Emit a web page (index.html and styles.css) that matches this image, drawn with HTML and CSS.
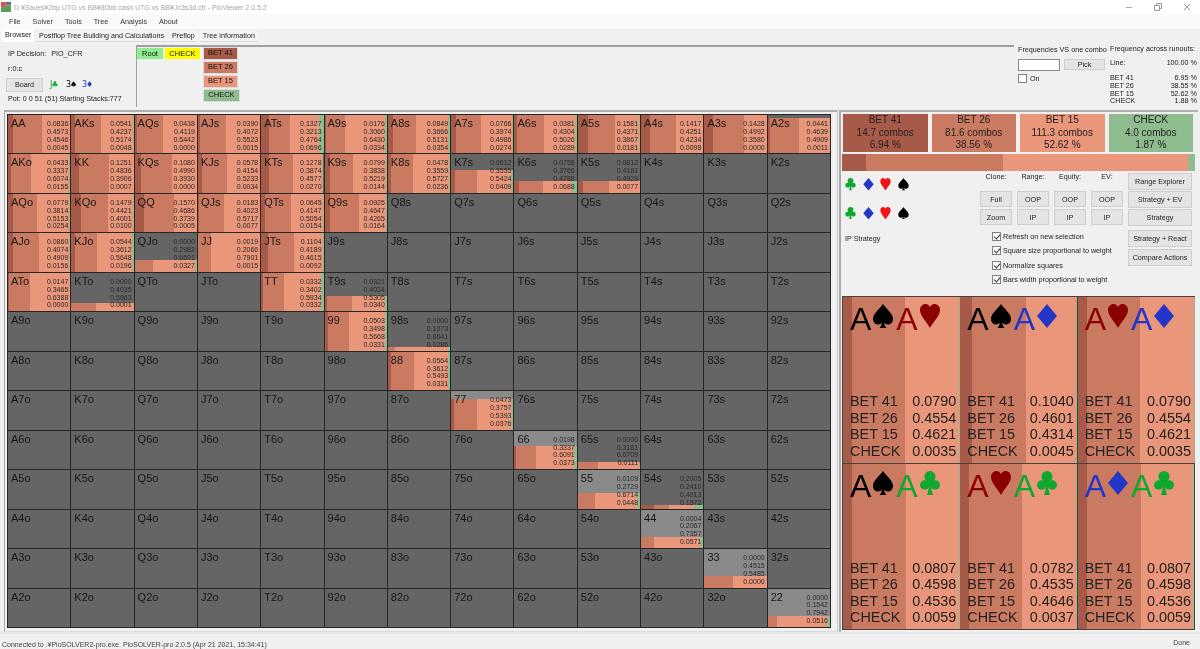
FILE: index.html
```html
<!DOCTYPE html>
<html lang="en">
<head>
<meta charset="utf-8">
<title>PioViewer 2.0.5.2</title>
<link rel="stylesheet" href="styles.css">
</head>
<body>
<svg class="defs" width="0" height="0" aria-hidden="true">
  <symbol id="spade" viewBox="0 0 20 24"><path d="M10 0C13 5 20 9 20 15C20 19 17 20.5 15 20.5C13 20.5 12 19.5 11.2 18.5C11.4 20.5 12 22.5 13.5 24H6.5C8 22.5 8.6 20.5 8.8 18.5C8 19.5 7 20.5 5 20.5C3 20.5 0 19 0 15C0 9 7 5 10 0Z"/></symbol>
  <symbol id="heart" viewBox="0 0 20 24"><path d="M10 24C7 18 0 12 0 6C0 2.5 2.5 0 5.5 0C7.5 0 9 1 10 3C11 1 12.5 0 14.5 0C17.5 0 20 2.5 20 6C20 12 13 18 10 24Z"/></symbol>
  <symbol id="diamond" viewBox="0 0 20 24"><path d="M10 0L20 12L10 24L0 12Z"/></symbol>
  <symbol id="club" viewBox="0 0 20 24"><circle cx="10" cy="5.5" r="5.5"/><circle cx="4.7" cy="14" r="4.7"/><circle cx="15.3" cy="14" r="4.7"/><path d="M9 8H11C11 15 11.3 20 13 24H7C8.7 20 9 15 9 8Z"/><path d="M7 10H13V15H7Z"/></symbol>
</svg>
<div class="app">
  <header class="titlebar">
    <svg class="appicon" width="10" height="10" viewBox="0 0 10 10"><rect width="10" height="10" fill="#8a8a8a"/><rect width="4" height="5" fill="#d9534f"/><rect x="5" y="5" width="5" height="5" fill="#4aa84a"/><rect y="6" width="4" height="4" fill="#4aa84a"/><rect x="5" width="5" height="2" fill="#6a6a6a"/></svg>
    <span class="titletext">D:¥Saves¥2bp UTG vs BB¥80bb cash UTG vs BB¥Jc3s3d.cfr - PioViewer 2.0.5.2</span>
    <div class="winctl">
      <svg width="8" height="8" viewBox="0 0 8 8"><path d="M1 4.5h6" stroke="#b0b0b0" fill="none"/></svg>
      <svg width="8" height="8" viewBox="0 0 8 8"><path d="M.5 2.5h5v5h-5zM2.5 2.5v-2h5v5h-2" stroke="#9a9a9a" fill="none"/></svg>
      <svg width="8" height="8" viewBox="0 0 8 8"><path d="M1 1l6 6M7 1l-6 6" stroke="#9a9a9a" fill="none"/></svg>
    </div>
  </header>
  <nav class="menubar"><span>File</span><span>Solver</span><span>Tools</span><span>Tree</span><span>Analysis</span><span>About</span></nav>
  <nav class="tabs"><span class="tab active">Browser</span><span class="tab">Postflop Tree Building and Calculations</span><span class="tab">Preflop</span><span class="tab">Tree information</span></nav>

  <section class="toppanel">
    <div class="info">
      <div class="decision"><span>IP Decision:</span><span>PIO_CFR</span></div>
      <div class="rline">r:0:c</div>
      <div class="boardrow"><button class="btn board">Board</button><span class="bc g">J♣</span><span class="bc k">3♠</span><span class="bc u">3♦</span></div>
      <div class="pot">Pot: 0 0 51 (51) Starting Stacks:777</div>
    </div>
    <div class="tree">
      <span class="node root">Root</span>
      <span class="node check">CHECK</span>
      <div class="children">
        <span class="node n1">BET 41</span>
        <span class="node n2">BET 26</span>
        <span class="node n3">BET 15</span>
        <span class="node n4">CHECK</span>
      </div>
    </div>
    <div class="vsone">
      <div class="vstitle">Frequencies VS one combo</div>
      <div class="pickrow"><span class="textbox"></span><button class="btn pick">Pick</button></div>
      <div class="onrow"><span class="cb off"></span><span>On</span></div>
    </div>
    <div class="runouts">
      <div class="rtitle">Frequency across runouts:</div>
      <div class="rrow line"><span>Line:</span><span>100.00 %</span></div>
      <div class="rrow"><span>BET 41</span><span>6.95 %</span></div>
      <div class="rrow"><span>BET 26</span><span>38.55 %</span></div>
      <div class="rrow"><span>BET 15</span><span>52.62 %</span></div>
      <div class="rrow"><span>CHECK</span><span>1.88 %</span></div>
    </div>
  </section>

  <main class="main">
    <section class="gridframe">
      <div class="grid">
        <div class="cell"><div class="fill"><i class="a" style="width:8.36%"></i><i class="b" style="width:45.73%"></i><i class="c" style="width:45.46%"></i><i class="d" style="width:.45%"></i></div><b>AA</b><p>0.0836<br>0.4573<br>0.4546<br>0.0045</p></div>
        <div class="cell"><div class="fill"><i class="a" style="width:5.41%"></i><i class="b" style="width:42.37%"></i><i class="c" style="width:51.74%"></i><i class="d" style="width:.48%"></i></div><b>AKs</b><p>0.0541<br>0.4237<br>0.5174<br>0.0048</p></div>
        <div class="cell"><div class="fill"><i class="a" style="width:4.38%"></i><i class="b" style="width:41.19%"></i><i class="c" style="width:54.42%"></i></div><b>AQs</b><p>0.0438<br>0.4119<br>0.5442<br>0.0000</p></div>
        <div class="cell"><div class="fill"><i class="a" style="width:3.9%"></i><i class="b" style="width:40.72%"></i><i class="c" style="width:55.23%"></i><i class="d" style="width:.15%"></i></div><b>AJs</b><p>0.0390<br>0.4072<br>0.5523<br>0.0015</p></div>
        <div class="cell"><div class="fill"><i class="a" style="width:13.27%"></i><i class="b" style="width:32.13%"></i><i class="c" style="width:47.64%"></i><i class="d" style="width:6.96%"></i></div><b>ATs</b><p>0.1327<br>0.3213<br>0.4764<br>0.0696</p></div>
        <div class="cell"><div class="fill"><i class="a" style="width:1.76%"></i><i class="b" style="width:30.6%"></i><i class="c" style="width:64.3%"></i><i class="d" style="width:3.34%"></i></div><b>A9s</b><p>0.0176<br>0.3060<br>0.6430<br>0.0334</p></div>
        <div class="cell"><div class="fill"><i class="a" style="width:8.49%"></i><i class="b" style="width:36.66%"></i><i class="c" style="width:51.31%"></i><i class="d" style="width:3.54%"></i></div><b>A8s</b><p>0.0849<br>0.3666<br>0.5131<br>0.0354</p></div>
        <div class="cell"><div class="fill"><i class="a" style="width:7.66%"></i><i class="b" style="width:39.74%"></i><i class="c" style="width:49.86%"></i><i class="d" style="width:2.74%"></i></div><b>A7s</b><p>0.0766<br>0.3974<br>0.4986<br>0.0274</p></div>
        <div class="cell"><div class="fill"><i class="a" style="width:3.81%"></i><i class="b" style="width:43.04%"></i><i class="c" style="width:50.26%"></i><i class="d" style="width:2.89%"></i></div><b>A6s</b><p>0.0381<br>0.4304<br>0.5026<br>0.0289</p></div>
        <div class="cell"><div class="fill"><i class="a" style="width:15.81%"></i><i class="b" style="width:43.71%"></i><i class="c" style="width:38.67%"></i><i class="d" style="width:1.81%"></i></div><b>A5s</b><p>0.1581<br>0.4371<br>0.3867<br>0.0181</p></div>
        <div class="cell"><div class="fill"><i class="a" style="width:14.17%"></i><i class="b" style="width:42.51%"></i><i class="c" style="width:42.34%"></i><i class="d" style="width:.98%"></i></div><b>A4s</b><p>0.1417<br>0.4251<br>0.4234<br>0.0098</p></div>
        <div class="cell"><div class="fill"><i class="a" style="width:14.28%"></i><i class="b" style="width:49.92%"></i><i class="c" style="width:35.8%"></i></div><b>A3s</b><p>0.1428<br>0.4992<br>0.3580<br>0.0000</p></div>
        <div class="cell"><div class="fill" style="height:92%"><i class="a" style="width:4.41%"></i><i class="b" style="width:46.39%"></i><i class="c" style="width:49.09%"></i><i class="d" style="width:.11%"></i></div><b>A2s</b><p>0.0441<br>0.4639<br>0.4909<br>0.0011</p></div>

        <div class="cell"><div class="fill"><i class="a" style="width:4.33%"></i><i class="b" style="width:33.37%"></i><i class="c" style="width:60.74%"></i><i class="d" style="width:1.55%"></i></div><b>AKo</b><p>0.0433<br>0.3337<br>0.6074<br>0.0155</p></div>
        <div class="cell"><div class="fill"><i class="a" style="width:12.51%"></i><i class="b" style="width:48.36%"></i><i class="c" style="width:39.06%"></i><i class="d" style="width:.07%"></i></div><b>KK</b><p>0.1251<br>0.4836<br>0.3906<br>0.0007</p></div>
        <div class="cell"><div class="fill"><i class="a" style="width:10.8%"></i><i class="b" style="width:49.9%"></i><i class="c" style="width:39.3%"></i></div><b>KQs</b><p>0.1080<br>0.4990<br>0.3930<br>0.0000</p></div>
        <div class="cell"><div class="fill"><i class="a" style="width:5.78%"></i><i class="b" style="width:41.54%"></i><i class="c" style="width:52.33%"></i><i class="d" style="width:.34%"></i></div><b>KJs</b><p>0.0578<br>0.4154<br>0.5233<br>0.0034</p></div>
        <div class="cell"><div class="fill"><i class="a" style="width:12.78%"></i><i class="b" style="width:38.74%"></i><i class="c" style="width:45.77%"></i><i class="d" style="width:2.7%"></i></div><b>KTs</b><p>0.1278<br>0.3874<br>0.4577<br>0.0270</p></div>
        <div class="cell"><div class="fill"><i class="a" style="width:7.99%"></i><i class="b" style="width:38.38%"></i><i class="c" style="width:52.19%"></i><i class="d" style="width:1.44%"></i></div><b>K9s</b><p>0.0799<br>0.3838<br>0.5219<br>0.0144</p></div>
        <div class="cell"><div class="fill"><i class="a" style="width:4.78%"></i><i class="b" style="width:35.59%"></i><i class="c" style="width:57.27%"></i><i class="d" style="width:2.36%"></i></div><b>K8s</b><p>0.0478<br>0.3559<br>0.5727<br>0.0236</p></div>
        <div class="cell"><div class="fill" style="height:60%"><i class="a" style="width:6.12%"></i><i class="b" style="width:35.55%"></i><i class="c" style="width:54.24%"></i><i class="d" style="width:4.09%"></i></div><b>K7s</b><p>0.0612<br>0.3555<br>0.5424<br>0.0409</p></div>
        <div class="cell"><div class="fill" style="height:30%"><i class="a" style="width:7.58%"></i><i class="b" style="width:37.66%"></i><i class="c" style="width:47.88%"></i><i class="d" style="width:6.88%"></i></div><b>K6s</b><p>0.0758<br>0.3766<br>0.4788<br>0.0688</p></div>
        <div class="cell"><div class="fill" style="height:30%"><i class="a" style="width:8.12%"></i><i class="b" style="width:41.81%"></i><i class="c" style="width:49.29%"></i><i class="d" style="width:.77%"></i></div><b>K5s</b><p>0.0812<br>0.4181<br>0.4929<br>0.0077</p></div>
        <div class="cell"><b>K4s</b></div>
        <div class="cell"><b>K3s</b></div>
        <div class="cell"><b>K2s</b></div>

        <div class="cell"><div class="fill"><i class="a" style="width:7.79%"></i><i class="b" style="width:38.14%"></i><i class="c" style="width:51.53%"></i><i class="d" style="width:2.54%"></i></div><b>AQo</b><p>0.0779<br>0.3814<br>0.5153<br>0.0254</p></div>
        <div class="cell"><div class="fill"><i class="a" style="width:14.79%"></i><i class="b" style="width:44.21%"></i><i class="c" style="width:40.01%"></i><i class="d" style="width:1%"></i></div><b>KQo</b><p>0.1479<br>0.4421<br>0.4001<br>0.0100</p></div>
        <div class="cell"><div class="fill"><i class="a" style="width:15.7%"></i><i class="b" style="width:46.86%"></i><i class="c" style="width:37.39%"></i><i class="d" style="width:.05%"></i></div><b>QQ</b><p>0.1570<br>0.4686<br>0.3739<br>0.0005</p></div>
        <div class="cell"><div class="fill"><i class="a" style="width:1.83%"></i><i class="b" style="width:40.23%"></i><i class="c" style="width:57.17%"></i><i class="d" style="width:.77%"></i></div><b>QJs</b><p>0.0183<br>0.4023<br>0.5717<br>0.0077</p></div>
        <div class="cell"><div class="fill"><i class="a" style="width:6.45%"></i><i class="b" style="width:41.47%"></i><i class="c" style="width:50.54%"></i><i class="d" style="width:1.54%"></i></div><b>QTs</b><p>0.0645<br>0.4147<br>0.5054<br>0.0154</p></div>
        <div class="cell"><div class="fill"><i class="a" style="width:9.25%"></i><i class="b" style="width:46.47%"></i><i class="c" style="width:42.65%"></i><i class="d" style="width:1.64%"></i></div><b>Q9s</b><p>0.0925<br>0.4647<br>0.4265<br>0.0164</p></div>
        <div class="cell"><b>Q8s</b></div>
        <div class="cell"><b>Q7s</b></div>
        <div class="cell"><b>Q6s</b></div>
        <div class="cell"><b>Q5s</b></div>
        <div class="cell"><b>Q4s</b></div>
        <div class="cell"><b>Q3s</b></div>
        <div class="cell"><b>Q2s</b></div>

        <div class="cell"><div class="fill"><i class="a" style="width:8.6%"></i><i class="b" style="width:40.74%"></i><i class="c" style="width:49.09%"></i><i class="d" style="width:1.56%"></i></div><b>AJo</b><p>0.0860<br>0.4074<br>0.4909<br>0.0156</p></div>
        <div class="cell"><div class="fill"><i class="a" style="width:5.44%"></i><i class="b" style="width:36.12%"></i><i class="c" style="width:56.48%"></i><i class="d" style="width:1.96%"></i></div><b>KJo</b><p>0.0544<br>0.3612<br>0.5648<br>0.0196</p></div>
        <div class="cell"><div class="fill" style="height:30%"><i class="b" style="width:29.82%"></i><i class="c" style="width:66.91%"></i><i class="d" style="width:3.27%"></i></div><b>QJo</b><p>0.0000<br>0.2982<br>0.6691<br>0.0327</p></div>
        <div class="cell"><div class="fill"><i class="a" style="width:.19%"></i><i class="b" style="width:20.66%"></i><i class="c" style="width:79.01%"></i><i class="d" style="width:.15%"></i></div><b>JJ</b><p>0.0019<br>0.2066<br>0.7901<br>0.0015</p></div>
        <div class="cell"><div class="fill"><i class="a" style="width:11.04%"></i><i class="b" style="width:41.89%"></i><i class="c" style="width:46.15%"></i><i class="d" style="width:.92%"></i></div><b>JTs</b><p>0.1104<br>0.4189<br>0.4615<br>0.0092</p></div>
        <div class="cell"><b>J9s</b></div>
        <div class="cell"><b>J8s</b></div>
        <div class="cell"><b>J7s</b></div>
        <div class="cell"><b>J6s</b></div>
        <div class="cell"><b>J5s</b></div>
        <div class="cell"><b>J4s</b></div>
        <div class="cell"><b>J3s</b></div>
        <div class="cell"><b>J2s</b></div>

        <div class="cell"><div class="fill"><i class="a" style="width:1.47%"></i><i class="b" style="width:34.65%"></i><i class="c" style="width:63.88%"></i></div><b>ATo</b><p>0.0147<br>0.3465<br>0.6388<br>0.0000</p></div>
        <div class="cell"><div class="fill" style="height:22%"><i class="b" style="width:40.35%"></i><i class="c" style="width:59.63%"></i><i class="d" style="width:.01%"></i></div><b>KTo</b><p>0.0000<br>0.4035<br>0.5963<br>0.0001</p></div>
        <div class="cell"><b>QTo</b></div>
        <div class="cell"><b>JTo</b></div>
        <div class="cell"><div class="fill"><i class="a" style="width:3.32%"></i><i class="b" style="width:34.02%"></i><i class="c" style="width:59.34%"></i><i class="d" style="width:3.32%"></i></div><b>TT</b><p>0.0332<br>0.3402<br>0.5934<br>0.0332</p></div>
        <div class="cell"><div class="fill" style="height:39%"><i class="a" style="width:3.21%"></i><i class="b" style="width:40.34%"></i><i class="c" style="width:53.05%"></i><i class="d" style="width:3.4%"></i></div><b>T9s</b><p>0.0321<br>0.4034<br>0.5305<br>0.0340</p></div>
        <div class="cell"><b>T8s</b></div>
        <div class="cell"><b>T7s</b></div>
        <div class="cell"><b>T6s</b></div>
        <div class="cell"><b>T5s</b></div>
        <div class="cell"><b>T4s</b></div>
        <div class="cell"><b>T3s</b></div>
        <div class="cell"><b>T2s</b></div>

        <div class="cell"><b>A9o</b></div>
        <div class="cell"><b>K9o</b></div>
        <div class="cell"><b>Q9o</b></div>
        <div class="cell"><b>J9o</b></div>
        <div class="cell"><b>T9o</b></div>
        <div class="cell"><div class="fill"><i class="a" style="width:5.03%"></i><i class="b" style="width:34.98%"></i><i class="c" style="width:56.68%"></i><i class="d" style="width:3.31%"></i></div><b>99</b><p>0.0503<br>0.3498<br>0.5668<br>0.0331</p></div>
        <div class="cell"><div class="fill" style="height:9%"><i class="b" style="width:10.73%"></i><i class="c" style="width:86.41%"></i><i class="d" style="width:2.86%"></i></div><b>98s</b><p>0.0000<br>0.1073<br>0.8641<br>0.0286</p></div>
        <div class="cell"><b>97s</b></div>
        <div class="cell"><b>96s</b></div>
        <div class="cell"><b>95s</b></div>
        <div class="cell"><b>94s</b></div>
        <div class="cell"><b>93s</b></div>
        <div class="cell"><b>92s</b></div>

        <div class="cell"><b>A8o</b></div>
        <div class="cell"><b>K8o</b></div>
        <div class="cell"><b>Q8o</b></div>
        <div class="cell"><b>J8o</b></div>
        <div class="cell"><b>T8o</b></div>
        <div class="cell"><b>98o</b></div>
        <div class="cell"><div class="fill"><i class="a" style="width:5.64%"></i><i class="b" style="width:36.12%"></i><i class="c" style="width:54.93%"></i><i class="d" style="width:3.31%"></i></div><b>88</b><p>0.0564<br>0.3612<br>0.5493<br>0.0331</p></div>
        <div class="cell"><b>87s</b></div>
        <div class="cell"><b>86s</b></div>
        <div class="cell"><b>85s</b></div>
        <div class="cell"><b>84s</b></div>
        <div class="cell"><b>83s</b></div>
        <div class="cell"><b>82s</b></div>

        <div class="cell"><b>A7o</b></div>
        <div class="cell"><b>K7o</b></div>
        <div class="cell"><b>Q7o</b></div>
        <div class="cell"><b>J7o</b></div>
        <div class="cell"><b>T7o</b></div>
        <div class="cell"><b>97o</b></div>
        <div class="cell"><b>87o</b></div>
        <div class="cell pair"><div class="fill" style="height:80%"><i class="a" style="width:4.73%"></i><i class="b" style="width:37.57%"></i><i class="c" style="width:53.93%"></i><i class="d" style="width:3.76%"></i></div><b>77</b><p>0.0473<br>0.3757<br>0.5393<br>0.0376</p></div>
        <div class="cell"><b>76s</b></div>
        <div class="cell"><b>75s</b></div>
        <div class="cell"><b>74s</b></div>
        <div class="cell"><b>73s</b></div>
        <div class="cell"><b>72s</b></div>

        <div class="cell"><b>A6o</b></div>
        <div class="cell"><b>K6o</b></div>
        <div class="cell"><b>Q6o</b></div>
        <div class="cell"><b>J6o</b></div>
        <div class="cell"><b>T6o</b></div>
        <div class="cell"><b>96o</b></div>
        <div class="cell"><b>86o</b></div>
        <div class="cell"><b>76o</b></div>
        <div class="cell pair"><div class="fill" style="height:60%"><i class="a" style="width:1.98%"></i><i class="b" style="width:33.37%"></i><i class="c" style="width:60.91%"></i><i class="d" style="width:3.73%"></i></div><b>66</b><p>0.0198<br>0.3337<br>0.6091<br>0.0373</p></div>
        <div class="cell"><div class="fill" style="height:19%"><i class="b" style="width:31.81%"></i><i class="c" style="width:67.09%"></i><i class="d" style="width:1.11%"></i></div><b>65s</b><p>0.0000<br>0.3181<br>0.6709<br>0.0111</p></div>
        <div class="cell"><b>64s</b></div>
        <div class="cell"><b>63s</b></div>
        <div class="cell"><b>62s</b></div>

        <div class="cell"><b>A5o</b></div>
        <div class="cell"><b>K5o</b></div>
        <div class="cell"><b>Q5o</b></div>
        <div class="cell"><b>J5o</b></div>
        <div class="cell"><b>T5o</b></div>
        <div class="cell"><b>95o</b></div>
        <div class="cell"><b>85o</b></div>
        <div class="cell"><b>75o</b></div>
        <div class="cell"><b>65o</b></div>
        <div class="cell pair"><div class="fill" style="height:40%"><i class="a" style="width:1.09%"></i><i class="b" style="width:27.29%"></i><i class="c" style="width:67.14%"></i><i class="d" style="width:4.48%"></i></div><b>55</b><p>0.0109<br>0.2729<br>0.6714<br>0.0448</p></div>
        <div class="cell"><div class="fill" style="height:10%"><i class="a" style="width:20.05%"></i><i class="b" style="width:24.1%"></i><i class="c" style="width:40.13%"></i><i class="d" style="width:15.72%"></i></div><b>54s</b><p>0.2005<br>0.2410<br>0.4013<br>0.1572</p></div>
        <div class="cell"><b>53s</b></div>
        <div class="cell"><b>52s</b></div>

        <div class="cell"><b>A4o</b></div>
        <div class="cell"><b>K4o</b></div>
        <div class="cell"><b>Q4o</b></div>
        <div class="cell"><b>J4o</b></div>
        <div class="cell"><b>T4o</b></div>
        <div class="cell"><b>94o</b></div>
        <div class="cell"><b>84o</b></div>
        <div class="cell"><b>74o</b></div>
        <div class="cell"><b>64o</b></div>
        <div class="cell"><b>54o</b></div>
        <div class="cell pair"><div class="fill" style="height:30%"><i class="a" style="width:.04%"></i><i class="b" style="width:20.67%"></i><i class="c" style="width:73.57%"></i><i class="d" style="width:5.71%"></i></div><b>44</b><p>0.0004<br>0.2067<br>0.7357<br>0.0571</p></div>
        <div class="cell"><b>43s</b></div>
        <div class="cell"><b>42s</b></div>

        <div class="cell"><b>A3o</b></div>
        <div class="cell"><b>K3o</b></div>
        <div class="cell"><b>Q3o</b></div>
        <div class="cell"><b>J3o</b></div>
        <div class="cell"><b>T3o</b></div>
        <div class="cell"><b>93o</b></div>
        <div class="cell"><b>83o</b></div>
        <div class="cell"><b>73o</b></div>
        <div class="cell"><b>63o</b></div>
        <div class="cell"><b>53o</b></div>
        <div class="cell"><b>43o</b></div>
        <div class="cell pair"><div class="fill" style="height:30%"><i class="b" style="width:45.15%"></i><i class="c" style="width:54.85%"></i></div><b>33</b><p>0.0000<br>0.4515<br>0.5485<br>0.0000</p></div>
        <div class="cell"><b>32s</b></div>

        <div class="cell"><b>A2o</b></div>
        <div class="cell"><b>K2o</b></div>
        <div class="cell"><b>Q2o</b></div>
        <div class="cell"><b>J2o</b></div>
        <div class="cell"><b>T2o</b></div>
        <div class="cell"><b>92o</b></div>
        <div class="cell"><b>82o</b></div>
        <div class="cell"><b>72o</b></div>
        <div class="cell"><b>62o</b></div>
        <div class="cell"><b>52o</b></div>
        <div class="cell"><b>42o</b></div>
        <div class="cell"><b>32o</b></div>
        <div class="cell pair"><div class="fill" style="height:28%"><i class="b" style="width:15.42%"></i><i class="c" style="width:79.42%"></i><i class="d" style="width:5.16%"></i></div><b>22</b><p>0.0000<br>0.1542<br>0.7942<br>0.0516</p></div>
      </div>
    </section>

    <aside class="side">
      <div class="summary">
        <div class="sumbox s1">BET 41<br>14.7 combos<br>6.94 %</div>
        <div class="sumbox s2">BET 26<br>81.6 combos<br>38.56 %</div>
        <div class="sumbox s3">BET 15<br>111.3 combos<br>52.62 %</div>
        <div class="sumbox s4">CHECK<br>4.0 combos<br>1.87 %</div>
      </div>
      <div class="stack"><i class="a" style="width:6.94%"></i><i class="b" style="width:38.56%"></i><i class="c" style="width:52.62%"></i><i class="d" style="width:1.88%"></i></div>

      <div class="controls">
        <div class="suitcol">
          <div class="suits"><svg class="g"><use href="#club"/></svg><svg class="u"><use href="#diamond"/></svg><svg class="r"><use href="#heart"/></svg><svg class="k"><use href="#spade"/></svg></div>
          <div class="suits"><svg class="g"><use href="#club"/></svg><svg class="u"><use href="#diamond"/></svg><svg class="r"><use href="#heart"/></svg><svg class="k"><use href="#spade"/></svg></div>
          <div class="ipstrat">IP Strategy</div>
        </div>
        <div class="midcol">
          <div class="btngrid">
            <span class="hd">Clone:</span><span class="hd">Range:</span><span class="hd">Equity:</span><span class="hd">EV:</span>
            <button class="btn">Full</button><button class="btn">OOP</button><button class="btn">OOP</button><button class="btn">OOP</button>
            <button class="btn">Zoom</button><button class="btn">IP</button><button class="btn">IP</button><button class="btn">IP</button>
          </div>
          <div class="checks">
            <div class="chk"><span class="cb"></span><span>Refresh on new selection</span></div>
            <div class="chk"><span class="cb"></span><span>Square size proportional to weight</span></div>
            <div class="chk"><span class="cb"></span><span>Normalize squares</span></div>
            <div class="chk"><span class="cb"></span><span>Bars width proportional to weight</span></div>
          </div>
        </div>
        <div class="btncol">
          <button class="btn">Range Explorer</button>
          <button class="btn">Strategy + EV</button>
          <button class="btn">Strategy</button>
          <button class="btn gap1">Strategy + React</button>
          <button class="btn">Compare Actions</button>
        </div>
      </div>

      <div class="combos">
        <article class="combo">
          <div class="bands"><i class="a" style="width:7.9%"></i><i class="b" style="width:45.54%"></i><i class="c" style="width:46.21%"></i><i class="d" style="width:.35%"></i></div>
          <h3><span class="k">A<svg><use href="#spade"/></svg></span><span class="dr">A<svg><use href="#heart"/></svg></span></h3>
          <dl><dt>BET 41</dt><dd>0.0790</dd><dt>BET 26</dt><dd>0.4554</dd><dt>BET 15</dt><dd>0.4621</dd><dt>CHECK</dt><dd>0.0035</dd></dl>
        </article>
        <article class="combo">
          <div class="bands"><i class="a" style="width:10.4%"></i><i class="b" style="width:46.01%"></i><i class="c" style="width:43.14%"></i><i class="d" style="width:.45%"></i></div>
          <h3><span class="k">A<svg><use href="#spade"/></svg></span><span class="u">A<svg><use href="#diamond"/></svg></span></h3>
          <dl><dt>BET 41</dt><dd>0.1040</dd><dt>BET 26</dt><dd>0.4601</dd><dt>BET 15</dt><dd>0.4314</dd><dt>CHECK</dt><dd>0.0045</dd></dl>
        </article>
        <article class="combo">
          <div class="bands"><i class="a" style="width:7.9%"></i><i class="b" style="width:45.54%"></i><i class="c" style="width:46.21%"></i><i class="d" style="width:.35%"></i></div>
          <h3><span class="dr">A<svg><use href="#heart"/></svg></span><span class="u">A<svg><use href="#diamond"/></svg></span></h3>
          <dl><dt>BET 41</dt><dd>0.0790</dd><dt>BET 26</dt><dd>0.4554</dd><dt>BET 15</dt><dd>0.4621</dd><dt>CHECK</dt><dd>0.0035</dd></dl>
        </article>
        <article class="combo">
          <div class="bands"><i class="a" style="width:8.07%"></i><i class="b" style="width:45.98%"></i><i class="c" style="width:45.36%"></i><i class="d" style="width:.59%"></i></div>
          <h3><span class="k">A<svg><use href="#spade"/></svg></span><span class="g">A<svg><use href="#club"/></svg></span></h3>
          <dl><dt>BET 41</dt><dd>0.0807</dd><dt>BET 26</dt><dd>0.4598</dd><dt>BET 15</dt><dd>0.4536</dd><dt>CHECK</dt><dd>0.0059</dd></dl>
        </article>
        <article class="combo">
          <div class="bands"><i class="a" style="width:7.82%"></i><i class="b" style="width:45.35%"></i><i class="c" style="width:46.46%"></i><i class="d" style="width:.37%"></i></div>
          <h3><span class="dr">A<svg><use href="#heart"/></svg></span><span class="g">A<svg><use href="#club"/></svg></span></h3>
          <dl><dt>BET 41</dt><dd>0.0782</dd><dt>BET 26</dt><dd>0.4535</dd><dt>BET 15</dt><dd>0.4646</dd><dt>CHECK</dt><dd>0.0037</dd></dl>
        </article>
        <article class="combo">
          <div class="bands"><i class="a" style="width:8.07%"></i><i class="b" style="width:45.98%"></i><i class="c" style="width:45.36%"></i><i class="d" style="width:.59%"></i></div>
          <h3><span class="u">A<svg><use href="#diamond"/></svg></span><span class="g">A<svg><use href="#club"/></svg></span></h3>
          <dl><dt>BET 41</dt><dd>0.0807</dd><dt>BET 26</dt><dd>0.4598</dd><dt>BET 15</dt><dd>0.4536</dd><dt>CHECK</dt><dd>0.0059</dd></dl>
        </article>
      </div>
    </aside>
  </main>

  <footer class="status"><span>Connected to .¥PioSOLVER2-pro.exe. PioSOLVER-pro 2.0.5 (Apr 21 2021, 15:34:41)</span><span class="done">Done</span></footer>
</div>
</body>
</html>
```
FILE: styles.css
```css
* { box-sizing: border-box; }
html, body { margin: 0; padding: 0; }
body { width: 1200px; height: 649px; overflow: hidden; background: #f0f0f0; font-family: "Liberation Sans", Arial, sans-serif; font-size: 7.2px; color: #222; }
.defs { position: absolute; }
.app { display: flex; flex-direction: column; height: 649px; filter: blur(.3px); }
.a { background: #a85a48; }
.b { background: #cb7a62; }
.c { background: #e9967a; }
.d { background: #8fbc8f; }
.g { color: #0fa82f; }
.k { color: #000; }
.r { color: #f01414; }
.u { color: #2436c8; }
.dr { color: #8b0000; }

.titlebar { height: 14px; background: #fff; display: flex; align-items: center; padding: 0 0 0 1px; gap: 3px; flex: none; }
.titletext { color: #a8a8a8; font-size: 7px; white-space: nowrap; }
.winctl { margin-left: auto; display: flex; gap: 21px; padding-right: 9px; }

.menubar { height: 15px; flex: none; background: #fafafa; display: flex; align-items: center; padding-left: 9px; gap: 12px; color: #333; }
.tabs { height: 13px; flex: none; background: #f0f0f0; display: flex; align-items: flex-end; padding-left: 1px; gap: 2px; }
.tab { height: 12px; line-height: 12px; padding: 0 3px; background: #f4f4f4; border-bottom: 1px solid #ddd; white-space: nowrap; flex: none; }
.tab.active { height: 13px; background: #fff; width: 33px; padding: 0 4px; border-bottom: 0; }

.toppanel { height: 68px; display: flex; flex: none; }
.info { width: 136px; flex: none; padding: 7px 0 0 8px; display: flex; flex-direction: column; }
.decision { display: flex; gap: 5px; height: 15px; }
.rline { height: 12px; }
.boardrow { display: flex; align-items: center; gap: 6px; height: 17px; margin-left: -2px; }
.btn { font: inherit; color: #222; background: #e4e4e4; border: 1px solid #cfcfcf; padding: 0; white-space: nowrap; }
.board { width: 37px; height: 14px; margin-right: 1px; }
.bc { font-size: 8px; font-family: "DejaVu Sans", sans-serif; width: 10px; letter-spacing: -1px; }
.pot { margin-top: 1px; white-space: nowrap; }

.tree { width: 878px; flex: none; height: 62px; margin-top: 3px; border-top: 2px solid #a0a0a0; border-left: 1px solid #a0a0a0; display: flex; align-items: flex-start; gap: 2px; font-size: 7.5px; color: #111; }
.node { display: block; height: 11px; line-height: 11px; text-align: center; margin-top: 1px; }
.root { width: 26px; background: #90ee90; }
.check { width: 35px; background: #ffff00; margin-right: 1px; }
.children { display: flex; flex-direction: column; gap: 1px; align-items: flex-start; }
.children .node { margin-top: 0; height: 11px; border: 1px solid #dcdcdc; box-sizing: content-box; line-height: 10px; }
.n1 { width: 33px; background: #a85a48; }
.n2 { width: 33px; background: #cb7a62; }
.n3 { width: 33px; background: #e9967a; }
.n4 { width: 35px; background: #8fbc8f; }

.vsone { width: 92px; flex: none; padding: 3px 0 0 4px; }
.vstitle { white-space: nowrap; height: 13px; }
.pickrow { display: flex; align-items: center; gap: 4px; height: 13px; }
.textbox { width: 42px; height: 12px; background: #fff; border: 1px solid #888; }
.pick { width: 41px; height: 11px; line-height: 8px; }
.onrow { display: flex; align-items: center; gap: 3px; margin-top: 3px; }
.runouts { flex: 1; padding: 2px 3px 0 4px; }
.rtitle { height: 15px; white-space: nowrap; }
.rrow { display: flex; justify-content: space-between; height: 7.8px; line-height: 8px; }
.rrow.line { height: 15px; }

.main { flex: 1; display: flex; min-height: 0; }
.gridframe { width: 834px; flex: none; margin: 0 0 0 4px; height: 522px; padding: 2px 6px 0 2px; border-left: 1px solid #aaa; border-top: 2px solid #b0b0b0; border-right: 1px solid #c8c8c8; border-bottom: 1px solid #dcdcdc; }
.grid { width: 824px; height: 514px; display: grid; grid-template-columns: repeat(13, 1fr); grid-template-rows: repeat(13, 1fr); gap: 1px; padding: 1px; background: #262626; }
.cell { position: relative; background: #656565; display: flex; justify-content: space-between; overflow: hidden; min-width: 0; min-height: 0; color: #161616; }
.cell.pair { background: #8a8a8a; }
.cell b { position: relative; font-weight: 400; font-size: 11px; line-height: 13px; padding: 2px 0 0 3px; }
.cell p { position: relative; margin: 0; padding: 5px 2px 0 0; font-size: 7px; line-height: 7.85px; text-align: right; color: #2a2a2a; }
.fill { position: absolute; left: 0; right: 0; bottom: 0; height: 100%; display: flex; }
.fill i { display: block; }

.side { flex: 1; margin: 0 2px 0 1px; height: 526px; border-left: 2px solid #aaa; border-top: 2px solid #b0b0b0; padding: 2px 0 0 1px; display: flex; flex-direction: column; }
.summary { display: flex; gap: 4px; padding-left: 1px; height: 38px; flex: none; }
.sumbox { width: 84.5px; height: 38px; text-align: center; font-size: 10px; line-height: 12.5px; color: #222; white-space: nowrap; }
.s1 { background: #a85a48; }
.s2 { background: #cb7a62; }
.s3 { background: #e9967a; }
.s4 { background: #8fbc8f; }
.stack { display: flex; width: 353px; height: 17px; margin-top: 2px; flex: none; }
.stack i { display: block; }

.controls { display: flex; height: 125px; flex: none; }
.suitcol { width: 138px; flex: none; padding: 7px 0 0 3px; }
.suits { display: flex; gap: 6.5px; height: 28.5px; }
.suits svg { width: 11px; height: 12.5px; fill: currentColor; }
.ipstrat { margin-top: -1px; }
.midcol { width: 148px; flex: none; }
.btngrid { display: grid; grid-template-columns: repeat(4, 32px); grid-template-rows: 19px 17px 16px; column-gap: 5px; row-gap: 1px; }
.hd { text-align: center; padding-top: 1px; }
.btngrid .btn { height: 16px; }
.checks { margin: 6px 0 0 12px; display: flex; flex-direction: column; gap: 3.4px; }
.chk { display: flex; align-items: center; gap: 2px; height: 11px; white-space: nowrap; }
.cb { width: 9px; height: 9px; flex: none; background: #fff; border: 1px solid #808080; position: relative; }
.chk .cb::after { content: ""; position: absolute; left: 2px; top: 0; width: 3px; height: 5px; border: solid #333; border-width: 0 1px 1px 0; transform: rotate(40deg); }
.btncol { width: 64px; flex: none; display: flex; flex-direction: column; gap: 1.5px; padding-top: 2px; }
.btncol .btn { height: 16.5px; }
.btncol .gap1 { margin-top: 3px; margin-bottom: 1px; }

.combos { display: grid; grid-template-columns: repeat(3, 1fr); grid-template-rows: repeat(2, 1fr); width: 353px; height: 334px; background: #444; gap: 1px; padding: 1px; flex: none; }
.combo { position: relative; min-width: 0; min-height: 0; display: flex; flex-direction: column; justify-content: space-between; padding: 4px 3px 3px 7px; color: #222; }
.bands { position: absolute; inset: 0; display: flex; }
.bands i { display: block; }
.combo h3 { position: relative; margin: 0; font-weight: 400; font-size: 32px; line-height: 36px; display: flex; gap: 3px; white-space: nowrap; }
.combo h3 span { display: flex; align-items: center; gap: 2px; }
.combo h3 svg { width: 20px; height: 24px; fill: currentColor; margin-bottom: 6px; }
.combo dl { position: relative; margin: 0; display: grid; grid-template-columns: 1fr auto; font-size: 14.4px; line-height: 16.6px; }
.combo dd { margin: 0; text-align: right; }

.status { height: 17px; flex: none; display: flex; justify-content: space-between; align-items: center; padding: 8px 10px 0 2px; font-size: 7px; background: linear-gradient(#e6e6e6 0 2px, #f0f0f0 2px); color: #444; }
.done { margin-top: -4px; }
```
